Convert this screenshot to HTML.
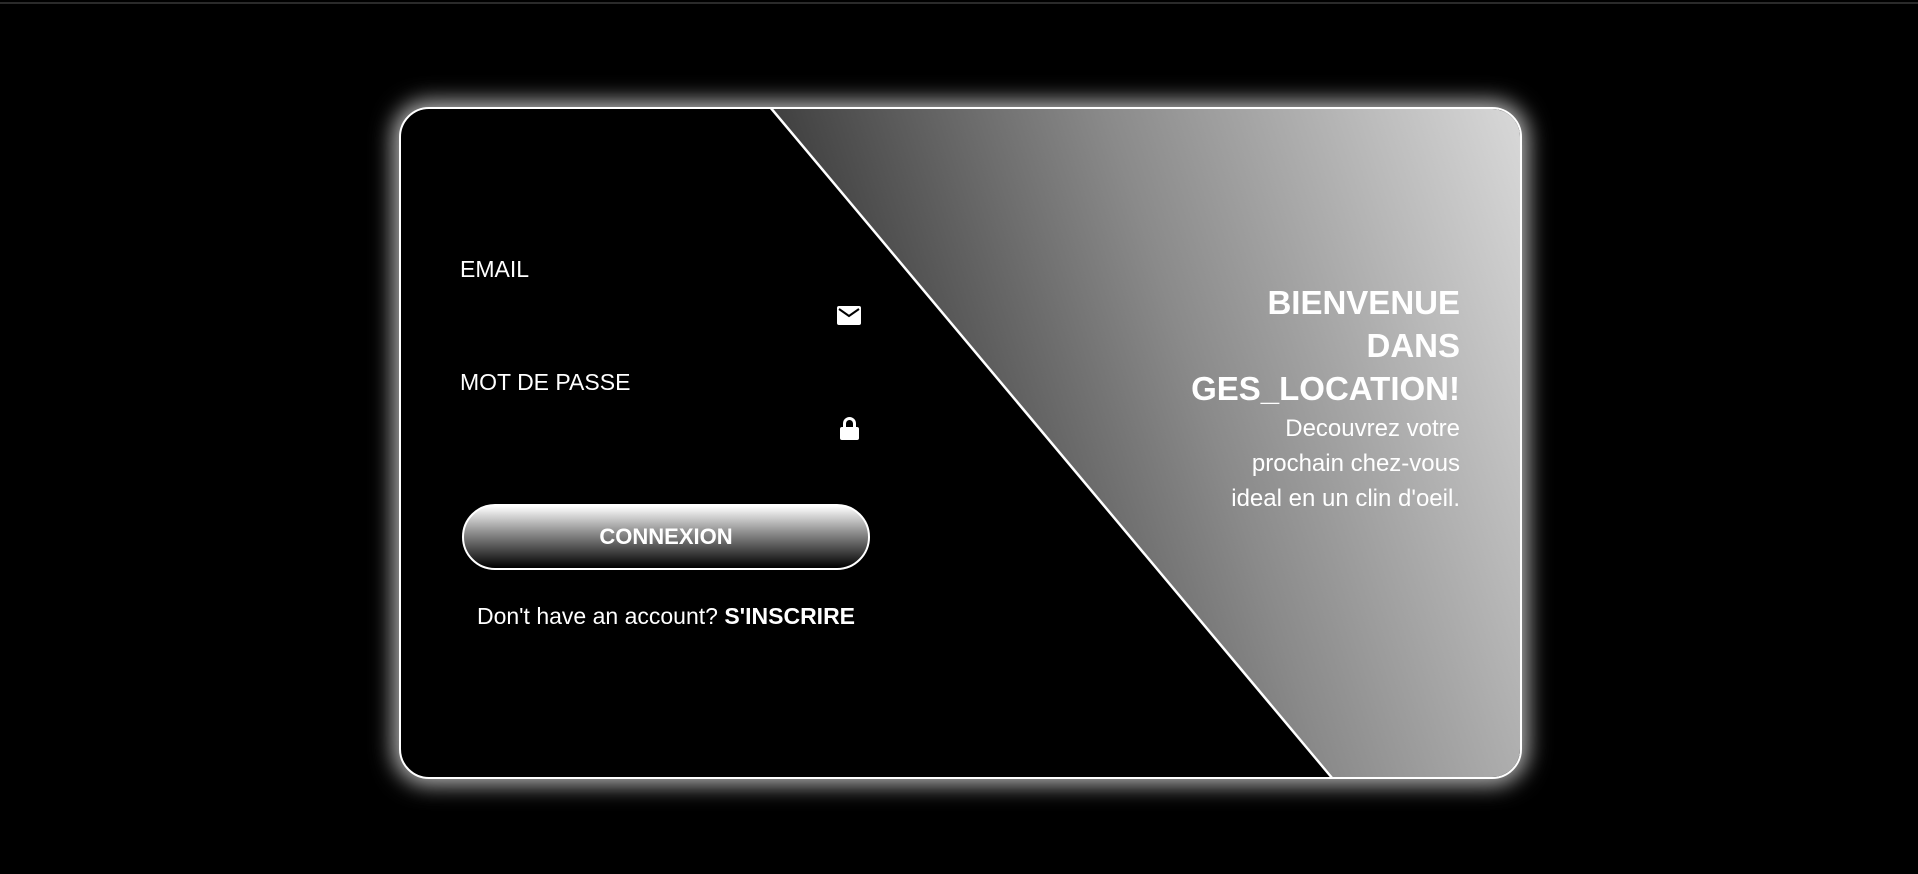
<!DOCTYPE html>
<html><head><meta charset="utf-8"><style>
html,body{margin:0;padding:0;background:#000;width:1918px;height:874px;overflow:hidden;font-family:"Liberation Sans",sans-serif;color:#fff}
.topline{position:absolute;left:0;top:2px;width:1918px;height:2px;background:#2a2a2a}
.card{position:absolute;left:399px;top:107px;width:1119px;height:668px;border:2px solid #fff;border-radius:30px;overflow:hidden;background:#000;box-shadow:0 0 22px 6px rgba(255,255,255,.7)}
svg.bg{position:absolute;left:0;top:0}
.lbl{position:absolute;left:59px;font-size:23px}
.ic{position:absolute}
.btn{position:absolute;left:61px;top:395px;width:404px;height:62px;border:2px solid #fff;border-radius:33px;background:linear-gradient(#fff 0%,#888 45%,#000 100%);text-align:center;line-height:62px;font-weight:bold;font-size:22px}
.su{position:absolute;left:61px;width:408px;top:494px;text-align:center;font-size:23px}
.rt{position:absolute;right:60px;text-align:right}
</style></head><body>
<div class="topline"></div>
<div class="card">
<svg class="bg" width="1119" height="668">
<defs><linearGradient id="g" x1="372" y1="250" x2="1118" y2="0" gradientUnits="userSpaceOnUse">
<stop offset="0" stop-color="#2e2e2e"/><stop offset="0.5" stop-color="#8a8a8a"/><stop offset="1" stop-color="#d8d8d8"/></linearGradient></defs>
<polygon points="369,0 1119,0 1119,668 932,668" fill="url(#g)"/>
<line x1="369" y1="-2" x2="932" y2="670" stroke="#fff" stroke-width="2.5"/>
</svg>
<div class="lbl" style="top:147px">EMAIL</div>
<svg class="ic" style="left:436px;top:197px" width="24" height="19" viewBox="0 0 24 19"><rect x="0" y="0" width="24" height="19" rx="2" fill="#fff"/><path d="M2 3 L12 10 L22 3" stroke="#000" stroke-width="2" fill="none"/></svg>
<div class="lbl" style="top:260px">MOT DE PASSE</div>
<svg class="ic" style="left:439px;top:308px" width="19" height="23" viewBox="0 0 19 23"><path d="M4.5 10 V6.5 a5 5 0 0 1 10 0 V10" stroke="#fff" stroke-width="3" fill="none"/><rect x="0" y="10" width="19" height="13" rx="2" fill="#fff"/></svg>
<div class="btn">CONNEXION</div>
<div class="su">Don't have an account? <b>S'INSCRIRE</b></div>
<div class="rt" style="top:172px;font-weight:bold;font-size:33px;line-height:43px">BIENVENUE<br>DANS<br>GES_LOCATION!</div>
<div class="rt" style="top:302px;font-size:24px;line-height:35px">Decouvrez votre<br>prochain chez-vous<br>ideal en un clin d'oeil.</div>
</div>
</body></html>
